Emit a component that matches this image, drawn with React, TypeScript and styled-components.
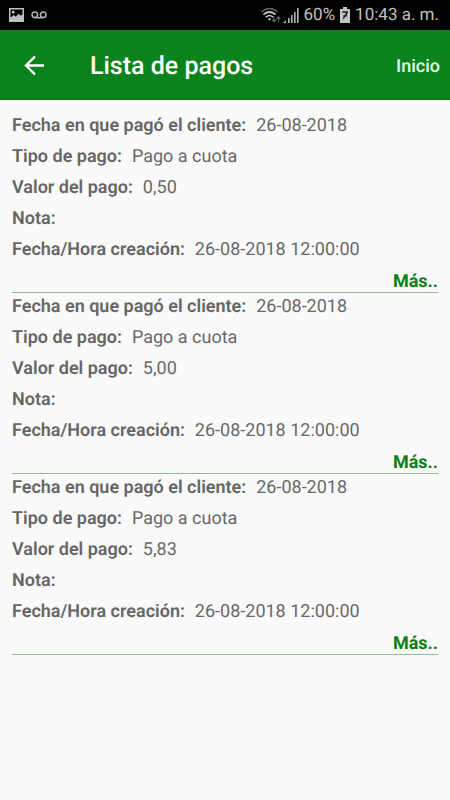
import React from "react";
import styled, { createGlobalStyle } from "styled-components";

const GlobalStyle = createGlobalStyle`
  * { box-sizing: border-box; }
  body {
    margin: 0;
    background: #fafafa;
    color: #616161;
    font-family: Roboto, "Liberation Sans", sans-serif;
    text-rendering: geometricPrecision;
  }
  button { font: inherit; border: 0; padding: 0; background: none; cursor: pointer; text-rendering: inherit; }
`;

const StatusBar = styled.div`
  display: flex;
  align-items: center;
  height: 30px;
  padding: 0 11px 0 9px;
  background: #000;
  color: #c0c0c0;
  font-size: 17px;
  line-height: 32px;
  white-space: nowrap;
`;

const StatusGroup = styled.div<{ $end?: boolean }>`
  display: flex;
  align-items: center;
  gap: ${(p) => (p.$end ? 5 : 7)}px;
  margin-left: ${(p) => (p.$end ? "auto" : "0")};
`;

const Icon = styled.svg`
  display: block;
  flex: none;
`;

const Signals = styled.div`
  display: flex;
  align-items: center;
  gap: 2px;
`;

const Toolbar = styled.header`
  display: flex;
  align-items: center;
  height: 70px;
  padding: 4px 10px 0 22px;
  background: #0a831c;
  border-bottom: 1px solid #07701a;
  color: #fff;
`;

const BackButton = styled.button`
  color: #fff;
`;

const Title = styled.h1`
  flex: 1;
  margin: 0 0 0 44px;
  font-size: 25px;
  font-weight: 500;
  line-height: 32px;
`;

const HomeButton = styled.button`
  && { font-size: 18px; font-weight: 500; }
  color: #e6ffe6;
  line-height: 24px;
`;

const PaymentList = styled.ul`
  margin: 0;
  padding: 12px;
  list-style: none;
`;

const Payment = styled.li`
  border-bottom: 1px solid #8fbc92;
`;

const Fields = styled.dl`
  display: flex;
  flex-direction: column;
  gap: 3px;
  margin: 0;
`;

const Field = styled.div`
  display: flex;
  gap: 10px;
  font-size: 18px;
  line-height: 28px;
  white-space: nowrap;
`;

const Label = styled.dt`
  color: #666;
  font-weight: 600;
`;

const Value = styled.dd`
  margin: 0;
  color: #686868;
`;

const Actions = styled.div`
  display: flex;
  justify-content: flex-end;
  padding-top: 8px;
`;

const MoreButton = styled.button`
  && { font-size: 18px; font-weight: 700; }
  color: #0a7f14;
  line-height: 20px;
`;

const payments = [
  { id: 1, value: "0,50" },
  { id: 2, value: "5,00" },
  { id: 3, value: "5,83" },
].map((p) => ({
  ...p,
  fields: [
    ["Fecha en que pagó el cliente:", "26-08-2018"],
    ["Tipo de pago:", "Pago a cuota"],
    ["Valor del pago:", p.value],
    ["Nota:", ""],
    ["Fecha/Hora creación:", "26-08-2018 12:00:00"],
  ],
}));

const PictureIcon = () => (
  <Icon width="15" height="14" viewBox="0 0 15 14" aria-hidden="true">
    <path fill="#c0c0c0" fillRule="evenodd" d="M0 0h15v14H0z M1.5 1.5v8.2l3.2-2.8 2.2 1.8 2.8-3 2 2 1.8-1.5V1.5z" />
    <circle cx="4.2" cy="4.2" r="1.4" fill="#c0c0c0" />
  </Icon>
);

const VoicemailIcon = () => (
  <Icon width="16" height="8" viewBox="0 0 16 8" fill="none" stroke="#b4b4b4" strokeWidth="1.5" aria-hidden="true">
    <circle cx="3.8" cy="3.8" r="2.8" />
    <circle cx="12.2" cy="3.8" r="2.8" />
    <path d="M3.8 6.7h8.4" />
  </Icon>
);

const WifiIcon = () => (
  <Icon width="20" height="17" viewBox="0 0 20 17" fill="none" strokeLinecap="round" aria-hidden="true">
    <path d="M1 4.5Q8.5-1.5 16 4.5" stroke="#686868" strokeWidth="1.5" />
    <path d="M3 7.2Q8.5 2.8 14 7.2M5.2 9.8Q8.5 7.2 11.8 9.8" stroke="#c4c4c4" strokeWidth="1.7" />
    <path d="M6.7 11.8Q8.5 10.5 10.3 11.8L8.5 13.7z" fill="#c4c4c4" />
    <path d="M13 10v4.5M11.4 13l1.6 1.7 1.6-1.7M17.5 14.5V10M15.9 11.5l1.6-1.7 1.6 1.7" stroke="#626262" strokeWidth="1.2" />
  </Icon>
);

const SignalIcon = () => (
  <Icon width="16" height="15" viewBox="0 0 16 15" fill="#b4b4b4" aria-hidden="true">
    <path d="M0 15l3-3v3zM5 10h1.6v5H5zM8 7h1.6v8H8zM11 4h1.6v11H11zM14 0h1.6v15H14z" />
  </Icon>
);

const BatteryIcon = () => (
  <Icon width="10" height="16" viewBox="0 0 10 16" aria-hidden="true">
    <path fill="#c4c4c4" d="M3 0h4v2h3v14H0V2h3z" />
    <path fill="none" stroke="#202020" strokeWidth="1.3" d="M2.2 5h5L6 9H3.2M7.2 5L3.2 12" />
  </Icon>
);

const BackIcon = () => (
  <Icon width="24" height="24" viewBox="0 0 24 24" fill="none" stroke="currentColor" strokeWidth="2.4" aria-hidden="true">
    <path d="M22 10.5H4M13 1.5l-9 9 9 9" />
  </Icon>
);

export default function App() {
  return (
    <>
      <GlobalStyle />
      <StatusBar>
        <StatusGroup>
          <PictureIcon />
          <VoicemailIcon />
        </StatusGroup>
        <StatusGroup $end>
          <Signals>
            <WifiIcon />
            <SignalIcon />
          </Signals>
          <span>60%</span>
          <BatteryIcon />
          <span>10:43 a. m.</span>
        </StatusGroup>
      </StatusBar>
      <Toolbar>
        <BackButton type="button" aria-label="Volver">
          <BackIcon />
        </BackButton>
        <Title>Lista de pagos</Title>
        <HomeButton type="button">Inicio</HomeButton>
      </Toolbar>
      <main>
        <PaymentList>
          {payments.map((payment) => (
            <Payment key={payment.id}>
              <Fields>
                {payment.fields.map(([label, value]) => (
                  <Field key={label}>
                    <Label>{label}</Label>
                    <Value>{value}</Value>
                  </Field>
                ))}
              </Fields>
              <Actions>
                <MoreButton type="button">Más..</MoreButton>
              </Actions>
            </Payment>
          ))}
        </PaymentList>
      </main>
    </>
  );
}
